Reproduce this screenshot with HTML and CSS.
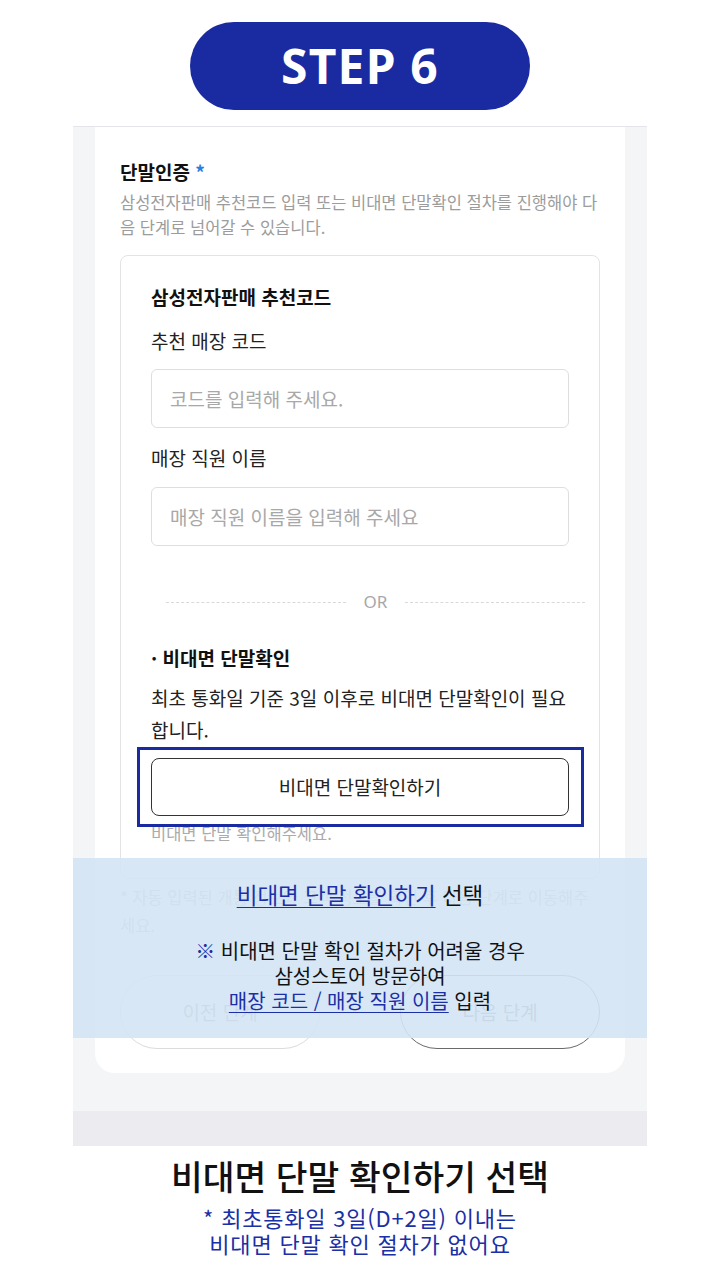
FILE: index.html
```html
<!DOCTYPE html>
<html lang="ko">
<head>
<meta charset="utf-8">
<title>STEP 6</title>
<link rel="stylesheet" href="styles.css">
</head>
<body>
<div class="step">STEP 6</div>

<div class="phone">
  <div class="card">
    <h2 class="sec-title">단말인증 <span class="req">*</span></h2>
    <p class="sec-desc">삼성전자판매 추천코드 입력 또는 비대면 단말확인 절차를 진행해야 다음 단계로 넘어갈 수 있습니다.</p>

    <div class="box">
      <h3 class="box-title">삼성전자판매 추천코드</h3>
      <div class="label">추천 매장 코드</div>
      <div class="input">코드를 입력해 주세요.</div>
      <div class="label label2">매장 직원 이름</div>
      <div class="input input2">매장 직원 이름을 입력해 주세요</div>

      <div class="divider"><span class="dash"></span><span class="or">OR</span><span class="dash"></span></div>

      <h3 class="bullet-title">· 비대면 단말확인</h3>
      <p class="para">최초 통화일 기준 3일 이후로 비대면 단말확인이 필요합니다.</p>
      <div class="btn-wrap">
        <div class="btn-outline">비대면 단말확인하기</div>
        <div class="highlight"></div>
      </div>
      <div class="hint">비대면 단말 확인해주세요.</div>
    </div>

    <p class="ghost">* 자동 입력된 개통 정보와 고객 정보를 확인 후 다음 단계로 이동해주세요.</p>

    <div class="nav">
      <div class="nav-btn">이전 단계</div>
      <div class="nav-btn nav-next">다음 단계</div>
    </div>
  </div>
  <div class="phone-gap"></div>
  <div class="phone-foot"></div>

  <div class="overlay">
    <div class="ov-line1"><span class="link">비대면 단말 확인하기</span> 선택</div>
    <div class="ov-note">
      <div><span class="mark">※</span> 비대면 단말 확인 절차가 어려울 경우</div>
      <div>삼성스토어 방문하여</div>
      <div><span class="link">매장 코드 / 매장 직원 이름</span> 입력</div>
    </div>
  </div>
</div>

<div class="caption">비대면 단말 확인하기 선택</div>
<div class="sub">* 최초통화일 3일(D+2일) 이내는<br>비대면 단말 확인 절차가 없어요</div>
</body>
</html>
```

FILE: styles.css
```css
* { box-sizing: border-box; }
html, body { margin: 0; padding: 0; background: #ffffff; }
body {
  width: 720px;
  font-family: "Noto Sans CJK KR", "Noto Sans", sans-serif;
  color: #111;
}
h2, h3, p { margin: 0; font-weight: inherit; }

.step {
  width: 340px;
  height: 88px;
  margin: 22px auto 0;
  border-radius: 44px;
  background: #1a2ba1;
  color: #fff;
  font-family: "Noto Sans", "Inter", sans-serif;
  font-weight: 700;
  font-size: 48px;
  line-height: 88px;
  text-align: center;
  letter-spacing: 1.2px;
}

.phone {
  position: relative;
  margin: 16px 73px 0;
  width: 574px;
  background: #f4f5f7;
  border-top: 1px solid #e4e5ea;
  display: flex;
  flex-direction: column;
}
.card {
  margin: 0 22px;
  background: #fff;
  border-radius: 0 0 20px 20px;
  padding: 32px 25px 24px;
}
.sec-title {
  font-size: 19px;
  line-height: 26px;
  font-weight: 700;
  color: #111;
}
.req { color: #2b7de0; }
.sec-desc {
  margin-top: 5px;
  font-size: 16.5px;
  line-height: 25px;
  color: #9c9c9c;
}
.box {
  margin-top: 15px;
  border: 1px solid #e3e3e3;
  border-radius: 8px;
  padding: 28px 30px 34px;
}
.box-title {
  font-size: 19px;
  line-height: 26px;
  font-weight: 700;
}
.label {
  margin-top: 18px;
  font-size: 19px;
  line-height: 26px;
  color: #222;
}
.label2 { margin-top: 17px; }
.input {
  margin-top: 15px;
  height: 59px;
  border: 1px solid #dedede;
  border-radius: 6px;
  padding: 0 18px;
  font-size: 19px;
  line-height: 57px;
  color: #a8a8a8;
}
.input2 { margin-top: 16px; }
.divider {
  margin: 46px -16px 0 15px;
  height: 20px;
  display: flex;
  align-items: center;
  gap: 18px;
}
.dash {
  flex: 1;
  border-top: 1px dashed #d9d9d9;
}
.or {
  font-family: "Noto Sans", sans-serif;
  font-size: 17px;
  line-height: 20px;
  color: #a8a8a8;
}
.bullet-title {
  margin-top: 33px;
  font-size: 19px;
  line-height: 26px;
  font-weight: 700;
}
.para {
  margin-top: 11px;
  font-size: 19px;
  line-height: 32px;
  color: #222;
}
.btn-wrap {
  position: relative;
  margin-top: 12px;
}
.btn-outline {
  height: 58px;
  border: 1.5px solid #333;
  border-radius: 8px;
  text-align: center;
  font-size: 19px;
  line-height: 55px;
  color: #222;
}
.highlight {
  position: absolute;
  left: -14px;
  right: -15px;
  top: -11px;
  bottom: -11px;
  border: 3px solid #1a2ba1;
}
.hint {
  margin-top: 6px;
  font-size: 16.5px;
  line-height: 22px;
  color: #ababab;
}
.ghost {
  margin-top: 4px;
  font-size: 16.5px;
  line-height: 28px;
  color: #b3b3b3;
}
.nav {
  margin-top: 36px;
  display: flex;
  justify-content: space-between;
}
.nav-btn {
  width: 200px;
  height: 74px;
  border: 1px solid #dcdcdc;
  border-radius: 37px;
  text-align: center;
  font-size: 19px;
  line-height: 72px;
  color: #888;
}
.nav-next { border-color: #6a6a6a; color: #666; }
.phone-gap { height: 38px; }
.phone-foot { height: 35px; background: #ececf0; }

.overlay {
  position: absolute;
  left: 0;
  right: 0;
  top: 731px;
  height: 180px;
  background: rgba(211, 228, 244, 0.9);
  text-align: center;
  padding-top: 21px;
  color: #111;
}
.ov-line1 {
  font-size: 22.5px;
  line-height: 30px;
}
.ov-note {
  margin-top: 29px;
  font-size: 20px;
  line-height: 25px;
}
.link {
  color: #1b2fa6;
  text-decoration: underline;
  text-underline-offset: 3px;
  text-decoration-thickness: 1px;
}
.mark { color: #1b2fa6; }

.caption {
  margin-top: 9px;
  text-align: center;
  font-size: 34.5px;
  line-height: 40px;
  font-weight: 500;
  color: #111;
}
.sub {
  margin-top: 9px;
  text-align: center;
  font-size: 22px;
  line-height: 26px;
  letter-spacing: 0.8px;
  color: #1b2fa6;
}
```
